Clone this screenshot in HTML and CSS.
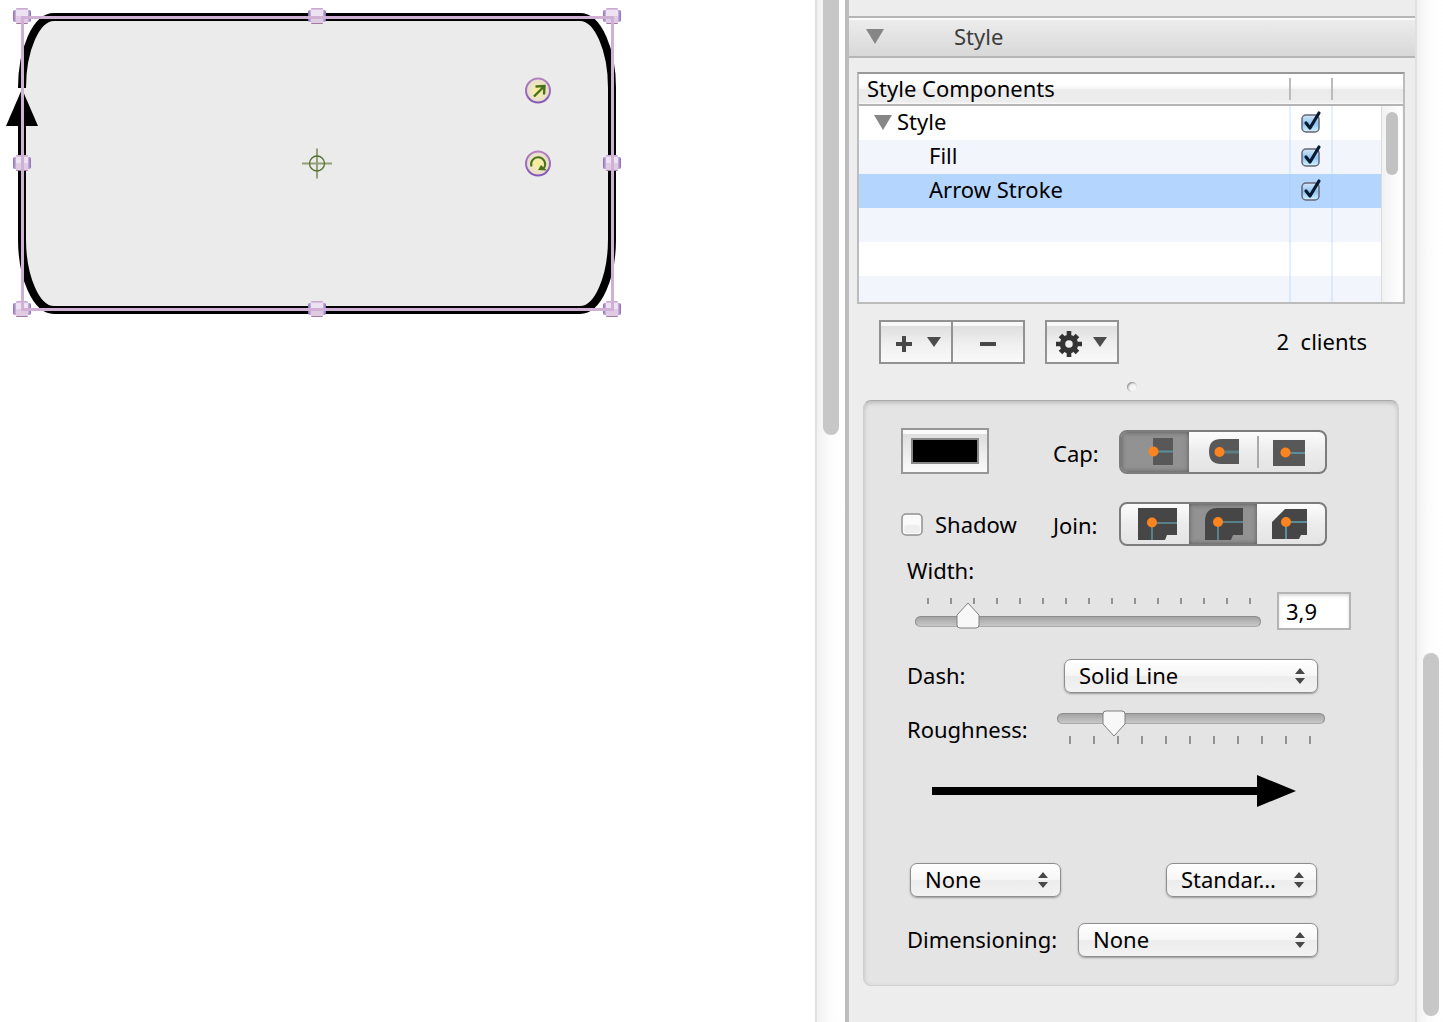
FILE: index.html
```html
<!DOCTYPE html>
<html lang="en">
<head>
<meta charset="utf-8">
<title>Style inspector</title>
<link rel="stylesheet" href="styles.css">
</head>
<body>
<main class="canvas">
  <svg class="drawing" viewBox="0 0 640 330" width="640" height="330" role="img" aria-label="Selected rounded rectangle">
    <defs>
      <linearGradient id="handleFill" x1="0" y1="0" x2="0" y2="1">
        <stop offset="0" stop-color="#c49fce"/><stop offset=".2" stop-color="#eee2f2"/><stop offset=".45" stop-color="#dccce4"/><stop offset=".85" stop-color="#e2cbe0"/><stop offset="1" stop-color="#946494"/>
      </linearGradient>
      <linearGradient id="handleSide">
        <stop offset="0" stop-color="#8a68ba"/><stop offset=".2" stop-color="#d8c8e4"/><stop offset=".8" stop-color="#d8c8e4"/><stop offset="1" stop-color="#8a68ba"/>
      </linearGradient>
      <linearGradient id="ring" x1="0" y1="0" x2="0" y2="1">
        <stop offset="0" stop-color="#b482c0"/><stop offset="1" stop-color="#8358b4"/>
      </linearGradient>
      <radialGradient id="glow">
        <stop offset="0" stop-color="#f8ee86"/><stop offset=".4" stop-color="#f3ebb4"/><stop offset="1" stop-color="#e4dad8"/>
      </radialGradient>
      <g id="handle">
        <rect x="-6" y="-8" width="12" height="16" rx="1" fill="url(#handleFill)"/>
        <rect x="-9" y="-6" width="18" height="12" rx="2" fill="url(#handleSide)"/>
        <rect x="-6" y="-6" width="12" height="6" fill="#ece2f2"/>
        <rect x="-6" y="0" width="12" height="7" fill="#e0cce2"/>
      </g>
    </defs>
    <path d="M54 17H580C598 17 612 50 612 88V239C612 277 598 310 580 310H54C36 310 22 277 22 239V88C22 50 36 17 54 17Z" fill="#ebebeb"/>
    <path d="M22 120V239C22 277 36 310 54 310H580C598 310 612 277 612 239V88C612 50 598 17 580 17H54C36 17 22 50 22 88" fill="none" stroke="#000" stroke-width="8"/>
    <path d="M22 89L38 126H6Z"/>
    <use href="#handle" x="22" y="16"/><use href="#handle" x="317" y="16"/><use href="#handle" x="612" y="16"/>
    <use href="#handle" x="22" y="163"/><use href="#handle" x="612" y="163"/>
    <use href="#handle" x="22" y="309"/><use href="#handle" x="317" y="309"/><use href="#handle" x="612" y="309"/>
    <rect x="22.500" y="17.500" width="590" height="292" fill="none" stroke="#d0b0d4" stroke-width="3"/>
    <g fill="none" stroke="#55702c">
      <path d="M302 163.500H332M317 148.500V178.500" stroke-width="2" stroke-opacity=".6"/>
      <circle cx="317" cy="163.500" r="7.500" stroke-width="1.300"/>
    </g>
    <g fill="url(#glow)" stroke="url(#ring)" stroke-width="2">
      <circle cx="538" cy="90.500" r="12"/><circle cx="538" cy="163.500" r="12"/>
    </g>
    <g fill="none" stroke="#48701c" stroke-width="2.400">
      <path d="M534 96.500L544 86.500M535.500 86.500L544.500 86L544 94.500"/>
      <path d="M531.500 166.500A7 7 0 1 1 544 168" stroke-width="2"/>
    </g>
    <path d="M538 170L541 165L547 170.500Z" fill="#48701c"/>
  </svg>
</main>
<div class="scrollbar scrollbar--canvas"><div class="thumb thumb--canvas"></div></div>

<aside class="inspector">
  <header class="section-bar">
    <svg class="disclosure" viewBox="0 0 18 15" width="18" height="15"><path d="M0 0H18L9 15Z"/></svg>
    <h2 class="section-title">Style</h2>
  </header>

  <div class="list">
    <table class="components">
      <colgroup><col><col class="col-check"><col class="col-extra"><col class="col-scroll"></colgroup>
      <thead>
        <tr><th scope="col">Style Components</th><th class="divided"></th><th class="divided" colspan="2"></th></tr>
      </thead>
      <tbody>
        <tr>
          <td class="root"><svg class="disclosure" viewBox="0 0 18 15" width="18" height="15"><path d="M0 0H18L9 15Z"/></svg><label for="c-style">Style</label></td>
          <td class="check"><input class="tick" type="checkbox" id="c-style" checked></td><td></td>
          <td class="list-scroll" rowspan="6"><div class="thumb thumb--list"></div></td>
        </tr>
        <tr><td class="child"><label for="c-fill">Fill</label></td><td class="check"><input class="tick" type="checkbox" id="c-fill" checked></td><td></td></tr>
        <tr class="selected"><td class="child"><label for="c-stroke">Arrow Stroke</label></td><td class="check"><input class="tick" type="checkbox" id="c-stroke" checked></td><td></td></tr>
        <tr><td></td><td></td><td></td></tr>
        <tr><td></td><td></td><td></td></tr>
        <tr><td></td><td></td><td></td></tr>
      </tbody>
    </table>
  </div>

  <div class="toolbar">
    <div class="button-group">
      <button class="square-button" type="button" aria-label="Add">
        <svg viewBox="0 0 70 40" width="70" height="40"><path d="M15 22H31M23 14V30" stroke="#484848" stroke-width="4"/><path d="M46 15H60L53 25Z" fill="#4c4c4c"/></svg>
      </button>
      <button class="square-button" type="button" aria-label="Remove">
        <svg viewBox="0 0 70 40" width="70" height="40"><path d="M27 22H43" stroke="#484848" stroke-width="4"/></svg>
      </button>
    </div>
    <div class="button-group">
      <button class="square-button" type="button" aria-label="Actions">
        <svg viewBox="0 0 70 40" width="70" height="40">
          <g transform="translate(22 22)" stroke="#333">
            <path d="M0-13V13M-13 0H13" stroke-width="4.600"/>
            <path d="M-8.500-8.500L8.500 8.500M8.500-8.500L-8.500 8.500" stroke-width="5"/>
            <circle r="6.500" fill="#efefef" stroke-width="5.500"/>
          </g>
          <path d="M46 15H60L53 25Z" fill="#4c4c4c"/>
        </svg>
      </button>
    </div>
    <span class="clients">2  clients</span>
  </div>
  <div class="dimple"></div>

  <form class="group">
    <div class="row row--pair">
      <button class="well" type="button" aria-label="Stroke color"><span class="well-color"></span></button>
      <span class="pair-text">Cap:</span>
      <div class="segments" role="group" aria-label="Cap">
        <button class="segment" type="button" aria-pressed="true" aria-label="Butt">
          <svg viewBox="0 0 68 40" width="68" height="40"><path d="M32 6H52V33H32Z" fill="#585858"/><path d="M32 19.500H52" stroke="#5a8e98" stroke-width="2"/><circle cx="32.500" cy="19.500" r="5" fill="#fe8420"/></svg>
        </button>
        <button class="segment" type="button" aria-pressed="false" aria-label="Round">
          <svg viewBox="0 0 68 40" width="68" height="40"><path d="M50 7H32C24 7 20 11 20 19.500S24 32 32 32H50Z" fill="#585858"/><path d="M31 20H50" stroke="#5a7e84" stroke-width="3"/><circle cx="30.500" cy="20" r="5" fill="#fe8420"/></svg>
        </button>
        <button class="segment segment--ruled" type="button" aria-pressed="false" aria-label="Square">
          <svg viewBox="0 0 68 40" width="68" height="40"><path d="M16 8H48V34H16Z" fill="#585858"/><path d="M29 21H48" stroke="#5a8e98" stroke-width="2"/><circle cx="28.500" cy="20.500" r="5" fill="#fe8420"/></svg>
        </button>
      </div>
    </div>
    <div class="row row--pair row--join">
      <label class="shadow pair-text"><input class="tick" type="checkbox">Shadow</label>
      <span class="pair-text">Join:</span>
      <div class="segments" role="group" aria-label="Join">
        <button class="segment" type="button" aria-pressed="false" aria-label="Miter">
          <svg viewBox="0 0 68 40" width="68" height="40"><path d="M17 4H56V31H46L44 36H17Z" fill="#464646"/><path d="M31 19H56M31 19V36" fill="none" stroke="#5a8088" stroke-width="2"/><circle cx="31" cy="18.500" r="5" fill="#fe8420"/></svg>
        </button>
        <button class="segment" type="button" aria-pressed="true" aria-label="Round">
          <svg viewBox="0 0 68 40" width="68" height="40"><path d="M28 4H54V31H44L42 36H16V17C16 9 20 4 28 4Z" fill="#464646"/><path d="M29 18H54M29 18V36" fill="none" stroke="#5a8088" stroke-width="2"/><circle cx="29" cy="18" r="5" fill="#fe8420"/></svg>
        </button>
        <button class="segment" type="button" aria-pressed="false" aria-label="Bevel">
          <svg viewBox="0 0 68 40" width="68" height="40"><path d="M28 5H50V31H44L42 35H15V18Z" fill="#464646"/><path d="M29 18H50M29 18V35" fill="none" stroke="#5a8e98" stroke-width="2"/><circle cx="29" cy="18" r="5" fill="#fe8420"/></svg>
        </button>
      </div>
    </div>

    <label class="width-label" for="width">Width:</label>
    <div class="row row--width">
      <input class="slider slider--up" id="width" type="range" min="0" max="1000" value="125">
      <input class="field" type="text" value="3,9" aria-label="Width value">
    </div>

    <div class="row row--dash">
      <label class="caption caption--dash" for="dash">Dash:</label>
      <select class="popup popup--dash" id="dash"><option>Solid Line</option></select>
    </div>
    <div class="row row--rough">
      <label class="caption caption--rough" for="rough">Roughness:</label>
      <input class="slider slider--down" id="rough" type="range" min="0" max="1000" value="182">
    </div>

    <svg class="preview" viewBox="0 0 364 34" width="364" height="34" role="img" aria-label="Stroke preview"><path d="M0 13H325V1L364 17L325 33V21H0Z"/></svg>

    <div class="row row--ends">
      <select class="popup popup--end" aria-label="Line start"><option>None</option></select>
      <select class="popup popup--end" aria-label="Line end"><option>Standar…</option></select>
    </div>
    <div class="row row--dim">
      <label class="caption caption--dim" for="dim">Dimensioning:</label>
      <select class="popup popup--dim" id="dim"><option>None</option></select>
    </div>
  </form>
</aside>
<div class="scrollbar scrollbar--panel"><div class="thumb thumb--panel"></div></div>
</body>
</html>
```
FILE: styles.css
```css
* { box-sizing: border-box; }

body {
  margin: 0;
  min-height: 100vh;
  display: flex;
  background: #fff;
  color: #000;
  font: 22px/28px "Noto Sans", "Lucida Grande", sans-serif;
}

button, input, select { font: inherit; color: inherit; margin: 0; }
button { padding: 0; border: 0; background: none; }
svg { display: block; }

/* Canvas */
.canvas { flex: 1; min-width: 0; overflow: hidden; }

/* Scroll bars */
.scrollbar {
  display: flex;
  flex: none;
  flex-direction: column;
  border-left: 2px solid #e0e0e0;
  background: linear-gradient(90deg, #f1f1f1, #fcfcfc 45%, #fff);
}
.scrollbar--canvas { width: 30px; padding-left: 6px; }
.scrollbar--panel { width: 28px; padding: 0 0 6px 6px; justify-content: flex-end; }
.thumb { width: 16px; border-radius: 8px; background: #c7c7c7; }
.thumb--canvas { height: 435px; border-radius: 0 0 8px 8px; }
.thumb--panel { height: 363px; }

/* Inspector */
.inspector {
  flex: 0 0 570px;
  padding-top: 16px;
  border-left: 4px solid #bcbcbc;
  background: #ededed;
}
.section-bar {
  display: flex;
  align-items: center;
  gap: 70px;
  height: 42px;
  padding: 0 0 2px 17px;
  border: solid #b5b5b5;
  border-width: 2px 0;
  background: linear-gradient(#fafafa 2px, #ececec 2px, #d8d8d8);
}
.section-title { margin: 0; font-size: 22px; font-weight: 400; color: #3c3c3c; }
.disclosure { fill: #868686; }

/* Component list */
.list {
  height: 232px;
  margin: 14px 10px 0 8px;
  overflow: hidden;
  border: 2px solid #bcbcbc;
  border-top-color: #999;
  background: #fff;
}
.components { width: 100%; table-layout: fixed; border-collapse: collapse; }
.col-check { width: 42px; }
.col-extra { width: 50px; }
.col-scroll { width: 22px; }
.components th {
  height: 32px;
  padding: 0 0 4px 8px;
  text-align: left;
  font-weight: 400;
  background: linear-gradient(#fff 0 10px, #f6f6f6 15px, #ebebeb 15px, #ededed 28px, #fafafa 30px, #b4b4b4 30px);
}
.components .divided {
  background:
    linear-gradient(#bbb, #bbb) 0 4px / 2px 22px no-repeat,
    linear-gradient(#fff 0 10px, #f6f6f6 15px, #ebebeb 15px, #ededed 28px, #fafafa 30px, #b4b4b4 30px);
}
.components tbody tr { height: 34px; }
.components tbody tr:nth-child(even) { background: #f2f6fc; }
.components tbody tr.selected { background: #b4d5fe; }
.components td { padding: 0 0 4px; }
.components tbody td + td:not(.list-scroll) {
  background: linear-gradient(#a0cdf84d, #a0cdf84d) 0 0 / 2px 100% no-repeat;
}
.root .disclosure { display: inline-block; margin: 0 5px 0 15px; }
.components .child { padding-left: 70px; }
.components .check { padding: 0 0 2px 11px; }
.check .tick { display: block; }
.components .list-scroll {
  padding: 6px 0 0 4px;
  vertical-align: top;
  border-left: 1px solid #dcdcdc;
  background: linear-gradient(90deg, #f1f1f1, #fff);
}
.thumb--list { width: 12px; height: 63px; border-radius: 6px; background: #c2c2c2; }

/* Tick boxes */
.tick {
  appearance: none;
  width: 22px;
  height: 24px;
  background: center / 22px 24px no-repeat url("data:image/svg+xml,%3Csvg xmlns='http://www.w3.org/2000/svg' viewBox='0 0 22 24'%3E%3Crect x='1' y='2' width='20' height='21' rx='4' fill='%23fafafa' stroke='%23909090' stroke-width='1.500'/%3E%3Crect x='3' y='13' width='16' height='8' rx='3' fill='%23eeeeee'/%3E%3C/svg%3E");
}
.tick:checked {
  background-image: url("data:image/svg+xml,%3Csvg xmlns='http://www.w3.org/2000/svg' viewBox='0 0 22 24'%3E%3ClinearGradient id='a' x1='0' y1='0' x2='0' y2='1'%3E%3Cstop offset='0' stop-color='%23d6e8f8'/%3E%3Cstop offset='.5' stop-color='%238ec4f2'/%3E%3Cstop offset='1' stop-color='%23d4f2fe'/%3E%3C/linearGradient%3E%3Crect x='2' y='5' width='17' height='17' rx='4' fill='url(%23a)' stroke='%23666678' stroke-width='1.500'/%3E%3Cpath d='M6 13L10 18L19 3' fill='none' stroke='%23061a30' stroke-width='3.200' stroke-linecap='round' stroke-linejoin='round'/%3E%3C/svg%3E");
}

/* Toolbar */
.toolbar {
  display: flex;
  align-items: center;
  gap: 20px;
  height: 44px;
  margin: 16px 48px 0 30px;
}
.button-group { display: flex; border: 2px solid #929292; }
.square-button {
  width: 70px;
  height: 40px;
  background: linear-gradient(#f8f8f8 4px, #dedede 4px, #eee 20px, #fafafa);
}
.square-button + .square-button { width: 72px; border-left: 2px solid #929292; }
.clients { margin-left: auto; padding-bottom: 2px; white-space: pre; }
.dimple {
  width: 10px;
  height: 10px;
  margin: 18px auto 8px;
  border-radius: 5px;
  background: #f6f6f6;
  box-shadow: inset 1px 1px 2px #888;
}

/* Stroke settings */
.group {
  margin: 0 16px 36px 14px;
  padding: 27px 37px;
  border: 1px solid #cfcfcf;
  border-top-color: #aaa;
  border-radius: 8px;
  background: #e4e4e4;
  box-shadow: inset 0 2px 4px #bbb;
}
.row { display: flex; align-items: center; height: 36px; }
.row--pair { display: grid; grid-template-columns: 152px 66px 208px; align-items: end; height: 46px; }
.row--join { height: 44px; margin-top: 28px; }
.pair-text { line-height: 46px; height: 44px; }
.well {
  width: 88px;
  height: 46px;
  padding: 8px;
  border: 2px solid #979797;
  background: linear-gradient(#fafafa 4px, #dedede 4px, #fafafa);
}
.well-color { display: block; height: 26px; border: 2px solid #888; background: #000; }
.segments {
  display: grid;
  grid-template-columns: repeat(3, 1fr);
  height: 44px;
  overflow: hidden;
  border: 2px solid #7c7c7c;
  border-radius: 8px;
  background: linear-gradient(#fcfcfc, #ececec 50%, #e4e4e4);
}
.segment[aria-pressed="true"] {
  background: #929292;
  box-shadow: inset 0 0 5px #555;
}
.segment--ruled { background: linear-gradient(#aaa, #aaa) 0 4px / 2px 32px no-repeat; }
.shadow { display: flex; align-items: center; gap: 12px; }

.width-label { display: block; margin: 10px 6px 8px; }
.row--width { height: 38px; padding-left: 14px; gap: 16px; }
.row--dash { margin-top: 28px; padding-left: 6px; }
.row--rough { margin-top: 16px; padding-left: 6px; }
.row--ends { margin-top: 54px; padding: 0 44px 0 9px; justify-content: space-between; }
.row--dim { margin-top: 24px; padding-left: 6px; }
.caption { padding-bottom: 2px; }
.caption--dash { width: 157px; }
.caption--rough { width: 150px; padding: 2px 0 0; }
.caption--dim { width: 171px; }
.preview { margin: 28px 0 0 31px; }

.field {
  width: 74px;
  height: 38px;
  padding: 0 7px;
  border: 2px solid #b4b4b4;
  background: #fff;
  box-shadow: inset 0 2px 3px #ddd;
}

.popup {
  appearance: none;
  height: 34px;
  padding: 0 14px 2px;
  border: 1px solid #8e8e8e;
  border-radius: 7px;
  box-shadow: 0 1px 2px #999;
  line-height: 30px;
  background:
    right 12px center / 10px 16px no-repeat url("data:image/svg+xml,%3Csvg xmlns='http://www.w3.org/2000/svg' viewBox='0 0 10 16'%3E%3Cpath d='M0 6L5 0L10 6ZM0 10H10L5 16Z' fill='%23484848'/%3E%3C/svg%3E"),
    linear-gradient(#fff, #f6f6f6 50%, #ececec 50%, #f2f2f2);
}
.popup--dash { width: 254px; }
.popup--end { width: 151px; }
.popup--dim { width: 240px; }

/* Sliders */
.slider { appearance: none; background: none; }
.slider--up {
  width: 346px;
  height: 38px;
  padding-top: 20px;
  background: repeating-linear-gradient(90deg, #929292 0 2px, transparent 2px 23px) 12px 6px / 324px 6px no-repeat;
}
.slider--down {
  width: 268px;
  height: 36px;
  padding-bottom: 20px;
  background: repeating-linear-gradient(90deg, #929292 0 2px, transparent 2px 24px) 12px 26px / 244px 8px no-repeat;
}
.slider::-webkit-slider-runnable-track {
  height: 11px;
  border: 1px solid #8c8c8c;
  border-bottom-color: #aaa;
  border-radius: 6px;
  background: linear-gradient(#a4a4a4, #c8c8c8);
}
.slider::-webkit-slider-thumb {
  appearance: none;
  width: 24px;
  height: 27px;
  background: url("data:image/svg+xml,%3Csvg xmlns='http://www.w3.org/2000/svg' viewBox='0 0 24 27'%3E%3Cpath d='M12 1L23 13V23Q23 26 20 26H4Q1 26 1 23V13Z' fill='%23f8f8f8' stroke='%23808080' stroke-linejoin='round'/%3E%3C/svg%3E") no-repeat;
}
.slider--up::-webkit-slider-thumb { margin-top: -15px; }
.slider--down::-webkit-slider-thumb {
  margin-top: -4px;
  background-image: url("data:image/svg+xml,%3Csvg xmlns='http://www.w3.org/2000/svg' viewBox='0 0 24 27'%3E%3Cpath d='M12 26L23 14V4Q23 1 20 1H4Q1 1 1 4V14Z' fill='%23f8f8f8' stroke='%23808080' stroke-linejoin='round'/%3E%3C/svg%3E");
}
```
